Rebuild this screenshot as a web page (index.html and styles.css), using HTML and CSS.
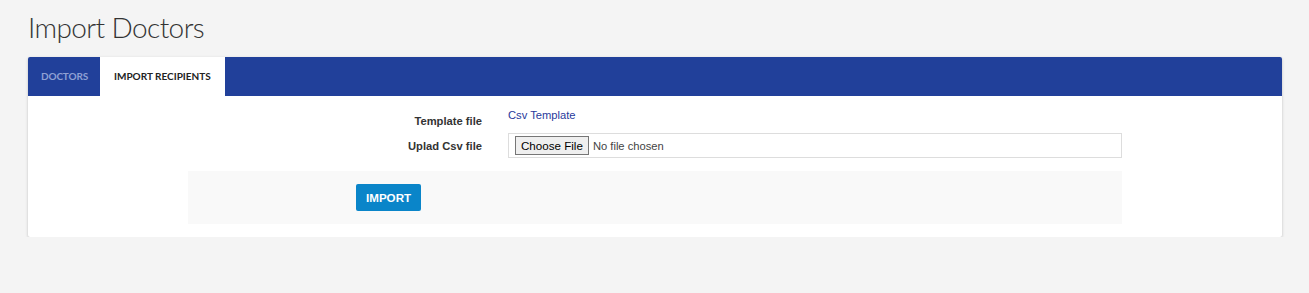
FILE: index.html
```html
<!DOCTYPE html>
<html>
<head>
<meta charset="utf-8">
<title>Import Doctors</title>
<link rel="stylesheet" href="styles.css">
</head>
<body>
<div class="page">
  <h1 class="page-title">Import Doctors</h1>
  <div class="card">
    <div class="tabs">
      <a class="tab">DOCTORS</a>
      <a class="tab active">IMPORT RECIPIENTS</a>
    </div>
    <div class="card-body">
      <form class="form">
        <div class="row row-first">
          <label class="label label-first">Template file</label>
          <div class="control"><a class="link" href="#">Csv Template</a></div>
        </div>
        <div class="row">
          <label class="label" for="csv">Uplad Csv file</label>
          <div class="control"><input class="file" id="csv" type="file"></div>
        </div>
        <div class="actions">
          <button class="btn" type="button">IMPORT</button>
        </div>
      </form>
    </div>
  </div>
</div>
</body>
</html>
```
FILE: styles.css
```css
html, body {
  margin: 0;
  padding: 0;
  background: #f4f4f4;
}
.page {
  padding: 0 27px 0 28px;
}
.page-title {
  margin: 0 0 13px 0;
  padding-top: 10px;
  font-family: Lato, "Open Sans", sans-serif;
  font-weight: 300;
  font-size: 28px;
  letter-spacing: -0.6px;
  line-height: 34px;
  color: #333;
}
.card {
  background: #fff;
  box-shadow: 0 1px 3px rgba(0,0,0,0.22);
  border-radius: 2px;
}
.tabs {
  display: flex;
  background: #21409a;
  height: 39px;
  border-radius: 2px 2px 0 0;
}
.tab {
  padding: 0 12px 0 13px;
  line-height: 39px;
  font-family: Lato, "Open Sans", sans-serif;
  font-weight: 700;
  font-size: 10px;
  letter-spacing: -0.15px;
  color: #8fa0d4;
}
.tab.active {
  padding: 0 14px 0 14px;
  background: #fff;
  color: #222;
  letter-spacing: 0;
}
.card-body {
  padding: 11px 160px 13px 160px;
}
.row {
  display: grid;
  grid-template-columns: 294px 614px;
  column-gap: 26px;
  align-items: start;
}
.row-first {
  margin-bottom: 4px;
}
.label {
  padding-top: 5px;
  text-align: right;
  font-family: "Liberation Sans", Arial, sans-serif;
  font-weight: 700;
  font-size: 11.2px;
  line-height: 17px;
  color: #333;
}
.label-first {
  padding-top: 6px;
  margin-bottom: -1px;
}
.control {
  font-family: "Liberation Sans", Arial, sans-serif;
  font-size: 11.2px;
  line-height: 17px;
}
.link {
  color: #283a9c;
  text-decoration: none;
}
.file {
  display: block;
  box-sizing: border-box;
  width: 100%;
  height: 25px;
  margin: 0;
  padding: 2px 6px;
  border: 1px solid #dddddd;
  font-family: "Liberation Sans", Arial, sans-serif;
  font-size: 11.2px;
  color: #444;
}
.file::file-selector-button {
  font-family: "Liberation Sans", Arial, sans-serif;
  font-size: 11.6px;
  height: 19px;
  padding: 0 5px;
  margin-right: 4px;
  border: 1px solid #767676;
  border-radius: 0;
  background: #efefef;
  color: #000;
}
.actions {
  margin-top: 13px;
  background: #f9f9f9;
  padding: 13px 0 13px 168px;
}
.btn {
  display: block;
  height: 27px;
  padding: 0 10px;
  border: 0;
  border-radius: 2px;
  background: #0a85c9;
  color: #fff;
  font-family: "Liberation Sans", Arial, sans-serif;
  font-weight: 700;
  font-size: 11.6px;
}
```
